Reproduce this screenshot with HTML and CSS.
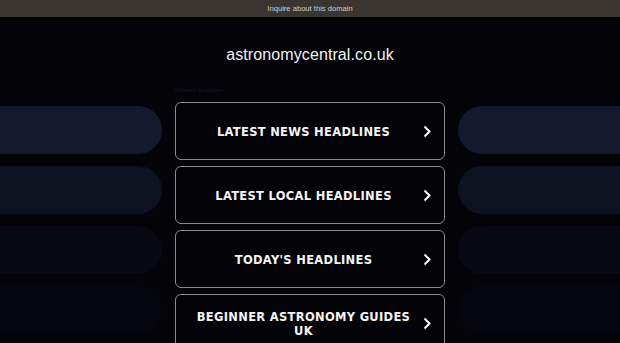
FILE: index.html
```html
<!DOCTYPE html>
<html lang="en">
<head>
<meta charset="utf-8">
<title>astronomycentral.co.uk</title>
<link rel="stylesheet" href="styles.css">
</head>
<body>
<div class="topbar"><a class="inquire" href="#">Inquire about this domain</a></div>
<h1 class="domain">astronomycentral.co.uk</h1>
<div class="layout">
  <div class="side side-left">
    <div class="pill p1"></div>
    <div class="pill p2"></div>
    <div class="pill p3"></div>
    <div class="pill p4"></div>
  </div>
  <div class="center">
    <div class="related">Related Searches</div>
    <a class="btn" href="#"><span class="btn-text">LATEST NEWS HEADLINES</span><svg class="chev" viewBox="0 0 8 13" width="8" height="13"><polyline points="1.5,1.5 6.5,6.5 1.5,11.5"/></svg></a>
    <a class="btn" href="#"><span class="btn-text">LATEST LOCAL HEADLINES</span><svg class="chev" viewBox="0 0 8 13" width="8" height="13"><polyline points="1.5,1.5 6.5,6.5 1.5,11.5"/></svg></a>
    <a class="btn" href="#"><span class="btn-text">TODAY'S HEADLINES</span><svg class="chev" viewBox="0 0 8 13" width="8" height="13"><polyline points="1.5,1.5 6.5,6.5 1.5,11.5"/></svg></a>
    <a class="btn" href="#"><span class="btn-text">BEGINNER ASTRONOMY GUIDES UK</span><svg class="chev" viewBox="0 0 8 13" width="8" height="13"><polyline points="1.5,1.5 6.5,6.5 1.5,11.5"/></svg></a>
  </div>
  <div class="side side-right">
    <div class="pill p1"></div>
    <div class="pill p2"></div>
    <div class="pill p3"></div>
    <div class="pill p4"></div>
  </div>
</div>
</body>
</html>
```
FILE: styles.css
```css
html, body {
  margin: 0;
  padding: 0;
  background: #040307;
  overflow: hidden;
  height: 343px;
}
body {
  font-family: "Liberation Sans", Arial, sans-serif;
  color: #fff;
}
.topbar {
  height: 17px;
  background: #3a3531;
  display: flex;
  align-items: center;
  justify-content: center;
}
.inquire {
  font-size: 7.6px;
  color: #d2cfcc;
  text-decoration: none;
  line-height: 17px;
}
.domain {
  margin: 28px 0 20px;
  font-size: 16px;
  line-height: 20px;
  font-weight: normal;
  text-align: center;
  color: #f2f2f2;
  letter-spacing: 0.1px;
}
.layout {
  display: grid;
  grid-template-columns: 162px 270px 162px;
  column-gap: 13px;
}
.side {
  padding-top: 21px;
  display: flex;
  flex-direction: column;
  gap: 12px;
}
.pill {
  height: 48px;
}
.side-left .pill { border-radius: 0 24px 24px 0; }
.side-right .pill { border-radius: 24px 0 0 24px; }
.p1 { background: #141a2d; }
.p2 { background: #0e111f; }
.p3 { background: #080912; }
.p4 { background: #05060d; }
.center {
  display: flex;
  flex-direction: column;
  gap: 6px;
}
.related {
  font-size: 6px;
  line-height: 10px;
  color: #15162a;
  margin-bottom: 1px;
}
.btn {
  box-sizing: border-box;
  height: 58px;
  border: 1.5px solid #8c8c8c;
  border-radius: 6px;
  display: flex;
  align-items: center;
  padding: 0 13px 0 12px;
  text-decoration: none;
  color: #fff;
}
.btn-text {
  flex: 1;
  text-align: center;
  font-family: "DejaVu Sans", Verdana, sans-serif;
  font-weight: bold;
  font-size: 11.5px;
  line-height: 14px;
  letter-spacing: 0.3px;
  padding-top: 2px;
  color: #f4f4f4;
}
.chev {
  flex: none;
  margin-left: 4px;
}
.chev polyline {
  fill: none;
  stroke: #fff;
  stroke-width: 2;
}
```
